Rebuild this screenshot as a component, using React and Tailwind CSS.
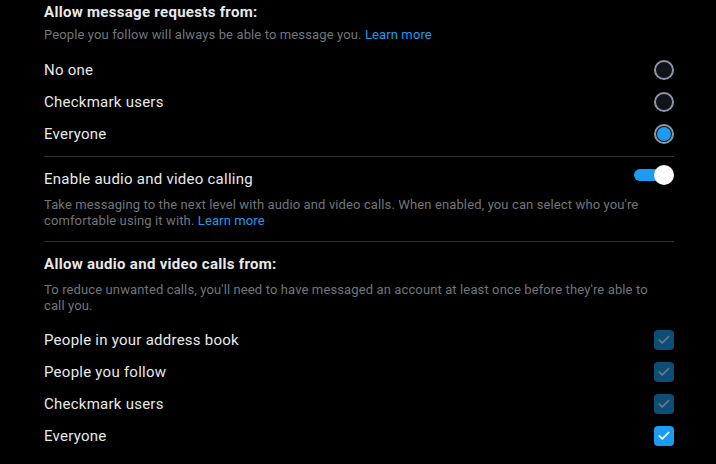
import { Check } from "lucide-react";

const font = { fontFamily: "Roboto, 'Liberation Sans', sans-serif" };

const Radio = ({ checked }) => (
    <div className="w-5 h-5 rounded-full border-2 border-[#8b98a5] bg-[#0f1419] flex items-center justify-center">
        {checked && <div className="w-[14px] h-[14px] rounded-full bg-[#1d9bf0]" />}
    </div>
);

const Box = ({ dim }) => (
    <div className={`w-5 h-5 rounded-[4px] flex items-center justify-center ${dim ? "bg-[#0e4d78]" : "bg-[#1d9bf0]"}`}>
        <Check size={14} strokeWidth={3} className={dim ? "text-[#71767b]" : "text-white"} />
    </div>
);

const Row = ({ label, children }) => (
    <div className="flex items-center justify-between h-8">
        <span className="text-[15px] tracking-[0.25px] text-[#e7e9ea]">{label}</span>
        {children}
    </div>
);

const App = () => {
    return (
        <div className="w-[716px] h-[464px] bg-black pl-[44px] pr-[42px] overflow-hidden" style={font}>
            <div className="pt-[2px] text-[15px] tracking-[0.3px] leading-5 font-bold text-[#e7e9ea]">Allow message requests from:</div>
            <div className="mt-[5px] text-[13px] tracking-[0.12px] leading-4 text-[#71767b]">
                People you follow will always be able to message you. <span className="text-[#1d9bf0]">Learn more</span>
            </div>
            <div className="mt-[11px] flex flex-col">
                <Row label="No one"><Radio /></Row>
                <Row label="Checkmark users"><Radio /></Row>
                <Row label="Everyone"><Radio checked /></Row>
            </div>
            <div className="mt-[6px] h-px bg-[#2f3336]" />

            <div className="mt-[12px] flex items-start justify-between">
                <span className="text-[15px] tracking-[0.25px] leading-5 text-[#e7e9ea]">Enable audio and video calling</span>
                <div className="relative w-10 h-5 -mt-[4px]">
                    <div className="absolute left-0 top-[4px] w-[30px] h-3 rounded-full bg-[#1d9bf0]" />
                    <div className="absolute right-0 top-0 w-5 h-5 rounded-full bg-white" />
                </div>
            </div>
            <div className="mt-[8px] text-[13px] tracking-[0.12px] leading-4 text-[#71767b] pr-[20px]">
                Take messaging to the next level with audio and video calls. When enabled, you can select who you're comfortable using it with. <span className="text-[#1d9bf0]">Learn more</span>
            </div>
            <div className="mt-[12px] h-px bg-[#2f3336]" />

            <div className="mt-[12px] text-[15px] tracking-[0.3px] leading-5 font-bold text-[#e7e9ea]">Allow audio and video calls from:</div>
            <div className="mt-[8px] text-[13px] tracking-[0.12px] leading-4 text-[#71767b] pr-[10px]">
                To reduce unwanted calls, you'll need to have messaged an account at least once before they're able to call you.
            </div>
            <div className="mt-[10px] flex flex-col">
                <Row label="People in your address book"><Box dim /></Row>
                <Row label="People you follow"><Box dim /></Row>
                <Row label="Checkmark users"><Box dim /></Row>
                <Row label="Everyone"><Box /></Row>
            </div>
        </div>
    );
};

export default App;
